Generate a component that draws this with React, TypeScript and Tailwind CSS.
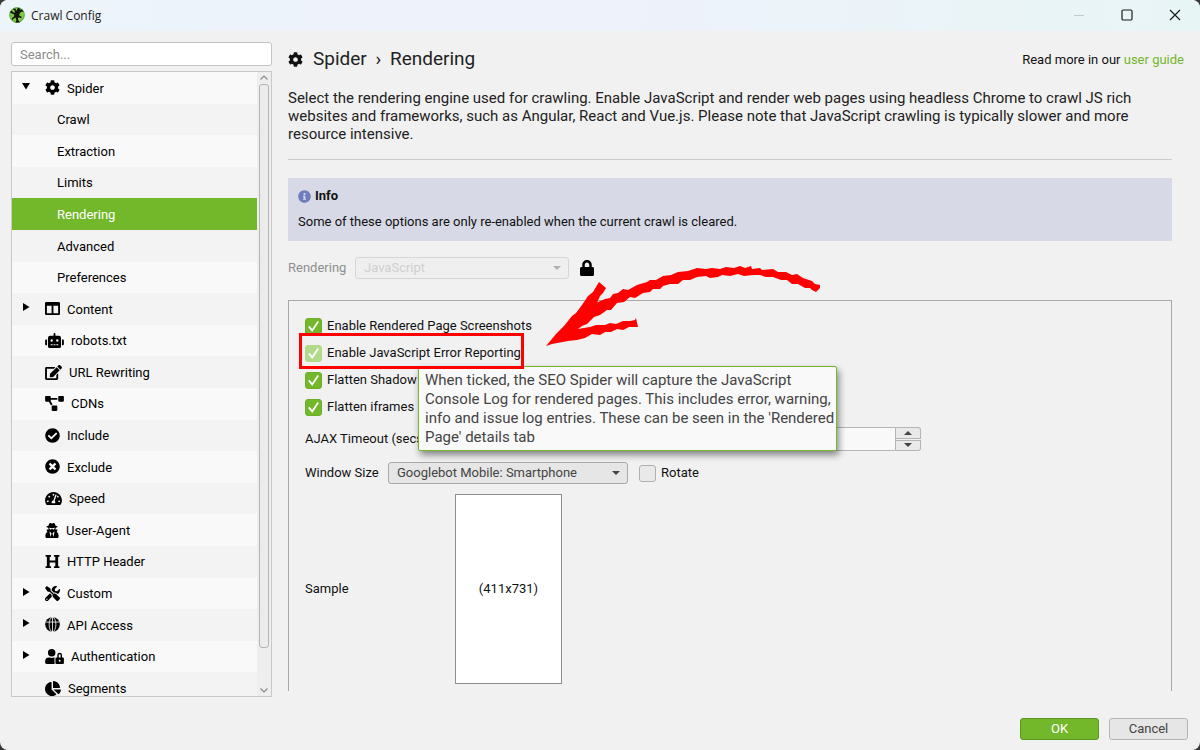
import { useState } from 'react';
import type { ComponentType } from 'react';
import {
  FaChartPie,
  FaCheckCircle,
  FaCog,
  FaColumns,
  FaEdit,
  FaHeading,
  FaInfoCircle,
  FaLock,
  FaProjectDiagram,
  FaRobot,
  FaTachometerAlt,
  FaTimesCircle,
  FaTools,
  FaUserLock,
  FaUserSecret,
} from 'react-icons/fa';

const GlobeIcon = ({ className }: { className?: string }) => (
  <svg viewBox="0 0 16 16" className={className}>
    <circle cx="8" cy="8" r="7.8" />
    <g fill="none" stroke="#f3f3f3" strokeWidth="0.9">
      <ellipse cx="8" cy="8" rx="3.6" ry="7.8" />
      <path d="M8 0v16M0.5 5.4h15" />
    </g>
  </svg>
);

interface NavItem {
  title: string;
  icon?: ComponentType<{ className?: string }>;
  size?: string;
  arrow?: 'open' | 'closed';
}

const navItems: NavItem[] = [
  { title: 'Spider', icon: FaCog, size: 'w-[15px]', arrow: 'open' },
  { title: 'Crawl' },
  { title: 'Extraction' },
  { title: 'Limits' },
  { title: 'Rendering' },
  { title: 'Advanced' },
  { title: 'Preferences' },
  { title: 'Content', icon: FaColumns, size: 'w-[15px]', arrow: 'closed' },
  { title: 'robots.txt', icon: FaRobot, size: 'w-[19px]' },
  { title: 'URL Rewriting', icon: FaEdit, size: 'w-[17px]' },
  { title: 'CDNs', icon: FaProjectDiagram, size: 'w-[19px]' },
  { title: 'Include', icon: FaCheckCircle, size: 'w-[15px]' },
  { title: 'Exclude', icon: FaTimesCircle, size: 'w-[15px]' },
  { title: 'Speed', icon: FaTachometerAlt, size: 'w-[17px]' },
  { title: 'User-Agent', icon: FaUserSecret, size: 'w-[14px]' },
  { title: 'HTTP Header', icon: FaHeading, size: 'w-[15px]' },
  { title: 'Custom', icon: FaTools, size: 'w-[15px]', arrow: 'closed' },
  { title: 'API Access', icon: GlobeIcon, size: 'w-[15px]', arrow: 'closed' },
  { title: 'Authentication', icon: FaUserLock, size: 'w-[19px]', arrow: 'closed' },
  { title: 'Segments', icon: FaChartPie, size: 'w-4' },
];

const FrogLogo = () => (
  <svg viewBox="0 0 16 16" className="h-4 w-4">
    <circle cx="8" cy="8" r="7.4" fill="#7fcb45" stroke="#4d9c2d" strokeWidth="0.8" />
    <path
      d="M0.8 5.2 2.4 3.6 4.6 5.4 6 5.6 5.4 3.2 3.6 2 6.2 1.6 7.6 3.8 8.6 1.2 10.6 0.8 10.8 2.8 13 2.2 14.6 4.4 12 5 10.6 6.6 10.2 8.6 12.6 9.8 12.4 11.6 10.8 10.6 9 10.8 9 12.6 11 15.4 6.4 15.6 7.4 13.4 6.6 10.6 4.4 11.8 3.4 13.2 2.8 11.2 5 9.4 5.4 7.6 3.4 6.8Z"
      fill="#10180c"
    />
  </svg>
);

const TitleBar = () => (
  <header className="flex h-[31px] shrink-0 items-center bg-linear-to-r from-[#edf4fa] via-[#eef2fb] to-[#e8f5f5] pr-px pb-px pl-[9px] text-[#1b1b1b]">
    <FrogLogo />
    <h1 className="ml-1.5 flex-1 pt-px font-['Open_Sans',sans-serif] text-xs">Crawl Config</h1>
    <button aria-label="Minimize" className="flex h-7 w-12 items-center justify-center text-[#c3cccd]">
      <svg viewBox="0 0 12 12" className="h-3 w-3" stroke="currentColor">
        <path d="M1 6.5h10" />
      </svg>
    </button>
    <button aria-label="Maximize" className="flex h-7 w-12 items-center justify-center">
      <svg viewBox="0 0 12 12" className="h-3 w-3" fill="none" stroke="currentColor" strokeWidth="1.2">
        <rect x="1" y="1" width="10" height="10" rx="1.2" />
      </svg>
    </button>
    <button aria-label="Close" className="flex h-7 w-12 items-center justify-center">
      <svg viewBox="0 0 12 12" className="h-3 w-3" stroke="currentColor" strokeWidth="1.2">
        <path d="M1 1l10 10M11 1L1 11" />
      </svg>
    </button>
  </header>
);

const Sidebar = () => {
  const [current, setCurrent] = useState('Rendering');

  return (
    <aside className="flex w-[261px] shrink-0 flex-col gap-[5px]">
      <input
        type="text"
        aria-label="Search"
        placeholder="Search..."
        className="h-6 w-full shrink-0 rounded-[3px] border border-[#c4c4c4] bg-white px-2 text-[13px] outline-none placeholder:text-[#8c8c8c]"
      />
      <div className="flex min-h-0 flex-1 overflow-hidden border border-[#c8c8c8]">
        <nav className="min-w-0 flex-1 overflow-hidden">
          <ul className="flex h-[632px] flex-col">
            {navItems.map((item) => {
              const Icon = item.icon;
              const active = item.title === current;
              return (
                <li key={item.title} className="flex min-h-0 flex-1 odd:bg-[#f9f9f9] even:bg-[#f3f3f3]">
                  <button
                    onClick={() => setCurrent(item.title)}
                    className={`flex w-full items-center pt-px text-left text-[13px] ${
                      active ? 'bg-[#73b72b] text-white' : 'text-black'
                    }`}
                  >
                    <span className="flex w-[33px] shrink-0 pl-2.5">
                      {item.arrow && (
                        <svg viewBox="0 0 8 8" className="mb-1 h-2 w-2">
                          <path d={item.arrow === 'open' ? 'M0 1h8L4 7.5z' : 'M1 0v8l6.5-4z'} />
                        </svg>
                      )}
                    </span>
                    {Icon ? <Icon className={`mr-[7px] mb-px h-[15px] ${item.size}`} /> : <span className="w-3" />}
                    {item.title}
                  </button>
                </li>
              );
            })}
          </ul>
        </nav>
        <div className="flex w-3.5 shrink-0 flex-col items-center bg-[#eeeeee] text-[#8a8a8a]">
          <svg viewBox="0 0 8 12" className="h-3 w-2" fill="none" stroke="currentColor" strokeWidth="1.2">
            <path d="M0.5 7.5 4 4l3.5 3.5" />
          </svg>
          <div className="mb-9 w-2.5 flex-1 rounded-[3px] border border-[#b5b5b5] bg-[#ebebeb]" />
          <svg viewBox="0 0 8 12" className="h-3 w-2" fill="none" stroke="currentColor" strokeWidth="1.2">
            <path d="M0.5 4.5 4 8l3.5-3.5" />
          </svg>
        </div>
      </div>
    </aside>
  );
};

interface CheckboxProps {
  label: string;
  checked?: boolean;
  hovered?: boolean;
}

const Checkbox = ({ label, checked = false, hovered = false }: CheckboxProps) => {
  const [on, setOn] = useState(checked);

  return (
    <label className="flex h-[18px] items-center gap-[5px] whitespace-nowrap text-[13px]">
      <span className="relative flex h-[17px] w-[17px]">
        <input
          type="checkbox"
          checked={on}
          onChange={(e) => setOn(e.target.checked)}
          className={`h-[17px] w-[17px] appearance-none rounded-[3px] border ${
            !on
              ? 'border-[#b0b0b0] bg-[#e9e9e9]'
              : hovered
                ? 'border-[#b1da8a] bg-[#b1da8a]'
                : 'border-[#6dae29] bg-[#73b72b]'
          }`}
        />
        {on && (
          <svg
            viewBox="0 0 17 17"
            className="pointer-events-none absolute inset-0"
            fill="none"
            stroke="#fff"
            strokeWidth="1.8"
          >
            <path d="M3.8 8.4l3.4 4 6-8.8" />
          </svg>
        )}
      </span>
      {label}
    </label>
  );
};

const SketchArrow = () => (
  <svg
    viewBox="0 0 290 95"
    className="pointer-events-none absolute -top-[41px] left-[251px] z-20 h-[95px] w-[290px]"
    fill="#f00"
  >
    <path d="M6 86 11 80 16 74 24 66 32 56 36 53 42 45 48 36 53 32 59 22 66 28 63 33 60 36 57 43 53 47 58 42 65 39 70 38 73 34 78 33 83 29 88 30 97 25 107 22 110 20 116 20 123 16 131 15 138 12 148 11 157 8 166 9 172 8 180 9 186 7 194 8 200 6 205 8 211 6 212 9 220 8 222 10 233 9 238 12 246 12 252 15 257 14 263 18 272 21 275 24 280 25 280 28 276 32 272 30 270 28 265 28 258 24 252 24 247 20 241 20 233 17 226 17 220 15 213 15 204 16 198 14 190 16 182 15 178 17 170 18 166 16 157 17 150 20 143 20 138 24 130 24 123 26 120 29 113 29 110 32 103 33 95 38 90 37 84 42 77 43 71 50 67 50 60 55 54 57 47 64 42 66 38 69 50 67 56 65 65 65 70 63 76 64 83 61 90 61 95 60 96 58 98 67 89 67 83 70 77 69 71 72 65 72 60 75 52 74 45 78 37 80 28 81 12 84Z" />
  </svg>
);

const RenderingOptions = () => (
  <div className="relative flex-1 border-x border-t border-[#a9a9a9] px-4 pt-4">
    <div className="flex flex-col gap-[9px]">
      <Checkbox label="Enable Rendered Page Screenshots" checked />
      <Checkbox label="Enable JavaScript Error Reporting" checked hovered />
      <Checkbox label="Flatten Shadow" checked />
      <Checkbox label="Flatten iframes" checked />
    </div>

    <div className="mt-[11px] flex h-6 items-center text-[13px]">
      <label htmlFor="ajax-timeout" className="w-[150px]">AJAX Timeout (secs)</label>
      <input
        id="ajax-timeout"
        type="text"
        className="h-6 w-[441px] rounded-l-[3px] border border-[#b5b5b5] bg-[#f9f9f9] px-2 outline-none"
      />
      <span className="flex h-6 w-[25px] flex-col gap-px">
        <button aria-label="Increase" className="flex flex-1 items-center justify-center rounded-tr-[3px] border border-l-0 border-[#b5b5b5] bg-[#e9e9e9]">
          <svg viewBox="0 0 8 4" className="h-1 w-2" fill="#444">
            <path d="M0 4h8L4 0z" />
          </svg>
        </button>
        <button aria-label="Decrease" className="flex flex-1 items-center justify-center rounded-br-[3px] border border-l-0 border-[#b5b5b5] bg-[#e9e9e9]">
          <svg viewBox="0 0 8 4" className="h-1 w-2" fill="#444">
            <path d="M0 0h8L4 4z" />
          </svg>
        </button>
      </span>
    </div>

    <div className="mt-[11px] flex items-center text-[13px]">
      <label htmlFor="window-size" className="w-[83px]">Window Size</label>
      <span className="relative mr-[11px]">
        <select
          id="window-size"
          className="block h-[22px] w-60 appearance-none rounded-[3px] border border-[#aaa] bg-[#e6e6e6] px-2 text-[13px] text-[#444]"
        >
          <option>Googlebot Mobile: Smartphone</option>
        </select>
        <svg viewBox="0 0 8 4" className="pointer-events-none absolute top-[9px] right-2 h-1 w-2" fill="#444">
          <path d="M0 0h8L4 4z" />
        </svg>
      </span>
      <Checkbox label="Rotate" />
    </div>

    <div className="mt-2.5 flex items-center text-[13px]">
      <span className="w-[150px]">Sample</span>
      <div className="flex h-[190px] w-[107px] items-center justify-center border border-[#8e8e8e] bg-white">
        (411x731)
      </div>
    </div>

    <div
      role="tooltip"
      className="absolute top-[65px] left-[129px] z-10 rounded-[2px] border border-[#73b72b] bg-[#f9f9f9] pt-1 pr-0.5 pb-[3px] pl-1.5 text-[15px] leading-[19px] whitespace-nowrap text-[#444] shadow-[2px_4px_7px_rgba(0,0,0,0.45)]"
    >
      When ticked, the SEO Spider will capture the JavaScript
      <br />
      Console Log for rendered pages. This includes error, warning,
      <br />
      info and issue log entries. These can be seen in the 'Rendered
      <br />
      Page' details tab
    </div>
    <div className="pointer-events-none absolute top-8 left-2.5 z-20 h-9 w-[225px] border-[3px] border-[#f00]" />
    <SketchArrow />
  </div>
);

const Content = () => (
  <main className="flex min-w-0 flex-1 flex-col pr-7 pb-1.5">
    <div className="-mr-3 flex h-[35px] items-center">
      <FaCog className="h-[15px] w-[15px]" />
      <h2 className="ml-2.5 flex-1 text-[19px] text-[#222]">
        Spider <span className="mx-1">›</span> Rendering
      </h2>
      <p className="text-[13px]">
        Read more in our <a href="#" className="text-[#73b72b]">user guide</a>
      </p>
    </div>

    <p className="mt-3 max-w-[850px] text-[15px] leading-[18px] text-[#222]">
      Select the rendering engine used for crawling. Enable JavaScript and render web pages using
      headless Chrome to crawl JS rich websites and frameworks, such as Angular, React and Vue.js.
      Please note that JavaScript crawling is typically slower and more resource intensive.
    </p>

    <hr className="mt-4 border-[#ccc]" />

    <section className="mt-[18px] bg-[#d7dae6] px-2.5 pt-2 pb-[9px] text-[13px] leading-5">
      <h3 className="flex items-center gap-1 font-bold">
        <FaInfoCircle className="h-[13px] w-[13px] text-[#6f7dbe]" />
        Info
      </h3>
      <p className="mt-1.5">Some of these options are only re-enabled when the current crawl is cleared.</p>
    </section>

    <div className="mt-4 mb-[21px] flex items-center text-[13px] text-[#8f8f8f]">
      <label htmlFor="rendering" className="w-[67px]">Rendering</label>
      <span className="relative mr-[11px]">
        <select
          id="rendering"
          disabled
          className="block h-[22px] w-[214px] appearance-none rounded-[3px] border border-[#d6d6d6] bg-[#efefef] px-2 text-[13px] text-[#cfcfcf] opacity-100"
        >
          <option>JavaScript</option>
        </select>
        <svg viewBox="0 0 8 4" className="pointer-events-none absolute top-[9px] right-2 h-1 w-2" fill="#b0b0b0">
          <path d="M0 0h8L4 4z" />
        </svg>
      </span>
      <FaLock className="h-4 w-3.5 text-black" />
    </div>

    <RenderingOptions />
  </main>
);

export default function App() {
  return (
    <div className="h-screen bg-[#3a3a3a] font-[Roboto,sans-serif] text-[#111]">
      <div className="flex h-full flex-col overflow-hidden rounded-lg bg-[#f1f1f1]">
        <TitleBar />
        <div className="flex min-h-0 flex-1 gap-4 pt-[11px] pl-[11px]">
          <Sidebar />
          <Content />
        </div>
        <footer className="flex shrink-0 justify-end gap-2.5 px-3 pt-[21px] pb-2.5 text-[13px]">
          <button className="h-[22px] w-[79px] rounded-[3px] border border-[#5c9422] bg-[#73b72b] text-white">OK</button>
          <button className="h-[22px] w-[79px] rounded-[3px] border border-[#b5b5b5] bg-[#e6e6e6] text-[#444]">Cancel</button>
        </footer>
      </div>
    </div>
  );
}
